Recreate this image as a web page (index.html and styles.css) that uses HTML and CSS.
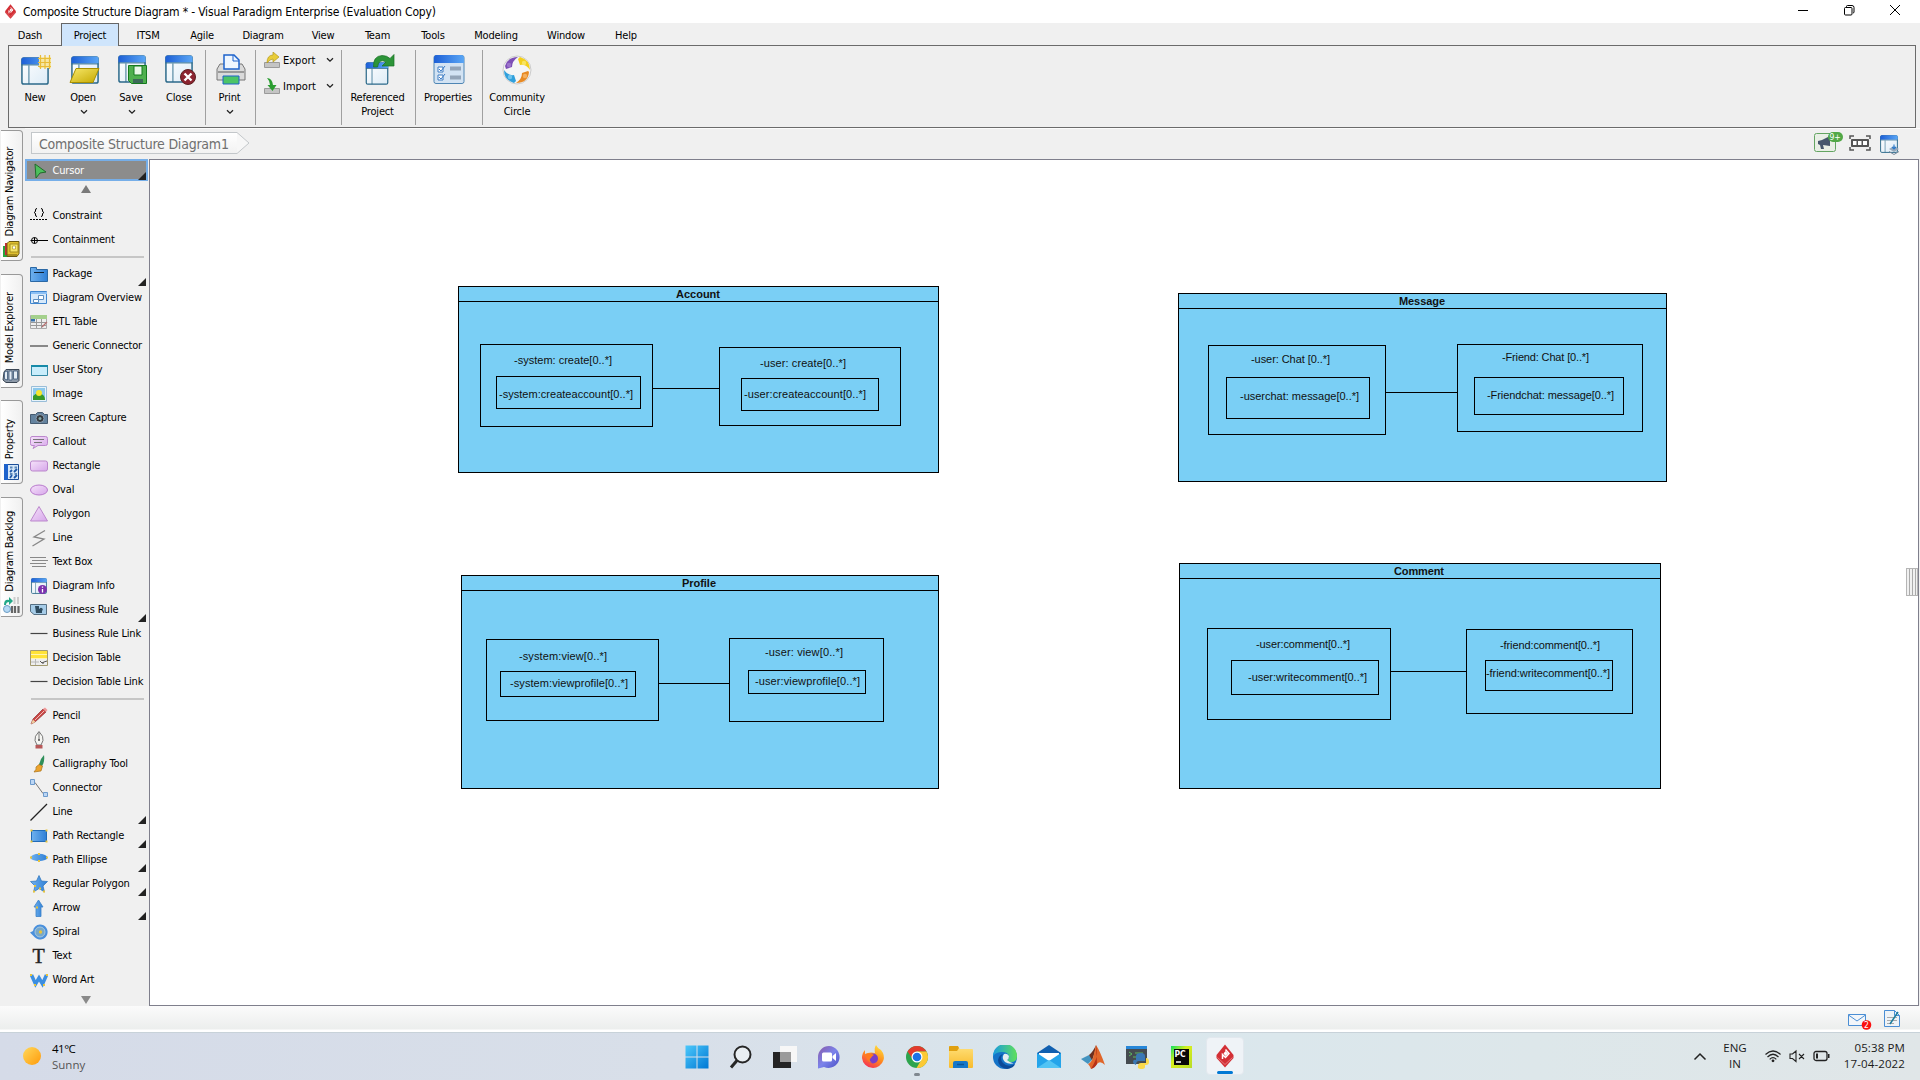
FILE: index.html
```html
<!DOCTYPE html>
<html lang="en">
<head>
<meta charset="utf-8">
<title>Composite Structure Diagram * - Visual Paradigm Enterprise (Evaluation Copy)</title>
<link rel="stylesheet" href="styles.css">
</head>
<body>
<svg class="defs" width="0" height="0" aria-hidden="true">
  <defs>
    <linearGradient id="bar" x2="1"><stop offset="0" stop-color="#1d5fd6"/><stop offset="1" stop-color="#5aa6f5"/></linearGradient>
    <linearGradient id="blue" x2="1"><stop offset="0" stop-color="#6fb1ee"/><stop offset="1" stop-color="#2f7fd6"/></linearGradient>
    <linearGradient id="pane" x2="1" y2="1"><stop offset="0" stop-color="#fff"/><stop offset="1" stop-color="#dcebf6"/></linearGradient>
    <linearGradient id="pink" x2="1" y2="1"><stop offset="0" stop-color="#f6e3fa"/><stop offset="1" stop-color="#d6a6ea"/></linearGradient>
    <linearGradient id="gold" x2="1" y2="1"><stop offset="0" stop-color="#f8e96a"/><stop offset="1" stop-color="#c4a800"/></linearGradient>
    <linearGradient id="win" x2="1" y2="1"><stop offset="0" stop-color="#4cc8fb"/><stop offset="1" stop-color="#0078d4"/></linearGradient>
    <linearGradient id="edge" x2="1" y2="0"><stop offset="0" stop-color="#1a9be0"/><stop offset="1" stop-color="#5fe05a"/></linearGradient>
    <linearGradient id="fox" x1="0.7" y1="0" x2="0.2" y2="1"><stop offset="0" stop-color="#ffdc3c"/><stop offset="0.5" stop-color="#ff8a1e"/><stop offset="1" stop-color="#f5285a"/></linearGradient>
    <linearGradient id="sun" x2="1" y2="1"><stop offset="0" stop-color="#ffd95c"/><stop offset="1" stop-color="#ff9a0a"/></linearGradient>
    <linearGradient id="chat" x2="1" y2="1"><stop offset="0" stop-color="#8a5aa8"/><stop offset="0.5" stop-color="#7b83eb"/><stop offset="1" stop-color="#4b4fc4"/></linearGradient>
    <linearGradient id="folder" x2="0" y2="1"><stop offset="0" stop-color="#ffe07a"/><stop offset="1" stop-color="#f8bb2c"/></linearGradient>
    <linearGradient id="pc" x2="1" y2="1"><stop offset="0" stop-color="#10e060"/><stop offset="0.4" stop-color="#d8f01e"/><stop offset="1" stop-color="#b8dc28"/></linearGradient>
    <symbol id="window" viewBox="0 0 30 30"><rect x="1" y="1" width="28" height="28" rx="2" fill="url(#pane)" stroke="#2c6a8a" stroke-width="1.6"/><path d="M0.5 8V3q0-2.500 2.500-2.500h24q2.500 0 2.500 2.500v5z" fill="url(#bar)"/><path d="M0.500 8.500h29M8.500 9v20" stroke="#2c6a8a"/></symbol>
    <symbol id="vp" viewBox="0 0 24 24"><path d="M12 0.500L20.500 11v3L12 23.500 3.500 14v-3z" fill="#d32f35"/><path d="M12.500 5.500L16 9.500 12.500 13.500 9.500 10.500V15" fill="none" stroke="#fff" stroke-width="1.500"/><path d="M12.500 7L15 9.500 12.500 12 10.500 9.500z" fill="#fff"/><path d="M4.500 13.500l7.500 7 7.500-7" fill="none" stroke="#e88a8e" stroke-width="0.800"/></symbol>
    <symbol id="chev" viewBox="0 0 8 6"><path d="M1 1.200l3 3 3-3" fill="none" stroke="#222" stroke-width="1.300"/></symbol>
  </defs>
</svg>

<header class="titlebar">
  <svg class="app-logo" viewBox="0 0 24 24"><use href="#vp"/></svg>
  <span class="title">Composite Structure Diagram * - Visual Paradigm Enterprise (Evaluation Copy)</span>
  <div class="window-buttons">
    <svg viewBox="0 0 12 12"><path d="M1 6.500h10" stroke="#000"/></svg>
    <svg viewBox="0 0 12 12"><path d="M3.500 3V2.500q0-1 1-1H9q2 0 2 2V8q0 1-1 1" fill="none" stroke="#000"/><rect x="1.500" y="3.500" width="7.500" height="7.500" rx="1" fill="none" stroke="#000"/></svg>
    <svg viewBox="0 0 12 12"><path d="M1 1l10 10M11 1L1 11" stroke="#000"/></svg>
  </div>
</header>

<nav class="menu">
  <span class="m-dash">Dash</span><span class="m-project active">Project</span><span class="m-itsm">ITSM</span><span class="m-agile">Agile</span><span class="m-diagram">Diagram</span><span class="m-view">View</span><span class="m-team">Team</span><span class="m-tools">Tools</span><span class="m-modeling">Modeling</span><span class="m-window">Window</span><span class="m-help">Help</span>
</nav>

<section class="ribbon">
  <div class="group first">
    <div class="cmd"><svg viewBox="0 0 32 32"><use href="#window" x="1" y="3" width="28" height="28"/><path d="M19 3h12v11H19z" fill="#f6e7a4"/><path d="M18 4.500h13M18 8.500h13M18 12.500h13M20.500 1v14M25 1v14M29.500 1v14" stroke="#e8bc38" stroke-width="1.200"/></svg><b>New</b></div>
    <div class="cmd"><svg viewBox="0 0 32 32"><use href="#window" x="3" y="2" width="28" height="28"/><path d="M8 14.500h23l-6 14H2z" fill="url(#gold)" stroke="#a89000"/></svg><b>Open</b><svg class="chev"><use href="#chev"/></svg></div>
    <div class="cmd"><svg viewBox="0 0 32 32"><use href="#window" x="2" y="1" width="28" height="28"/><path d="M12.500 11.500h18v18h-15l-3-3z" fill="#4fb04f" stroke="#157a1f"/><path d="M18 12h8v9h-8z" fill="#e8f8e8" stroke="#157a1f"/><path d="M17 25h10v4H17z" fill="#3c6a58"/></svg><b>Save</b><svg class="chev"><use href="#chev"/></svg></div>
    <div class="cmd"><svg viewBox="0 0 32 32"><use href="#window" x="1" y="1" width="28" height="28"/><circle cx="24" cy="23" r="7.500" fill="#8c2430" stroke="#5c2020"/><path d="M20.500 19.500l7 7M27.500 19.500l-7 7" stroke="#fff" stroke-width="2.400"/></svg><b>Close</b></div>
  </div>
  <div class="group">
    <div class="cmd"><svg viewBox="0 0 32 32"><path d="M5 10h22l3 5v11H2V15z" fill="#dadada" stroke="#777"/><path d="M9 1h10l5 5v9H9z" fill="#eef6ff" stroke="#1e63cc" stroke-width="1.500"/><path d="M18 1v6h6" fill="none" stroke="#1e63cc"/><path d="M3 18h26" stroke="#999" stroke-width="2"/><path d="M8 22h16v8H8z" fill="#4cc466" stroke="#1e63cc"/></svg><b>Print</b><svg class="chev"><use href="#chev"/></svg></div>
  </div>
  <div class="group stack">
    <div class="small"><svg viewBox="0 0 16 16"><path d="M0.500 10.500h15v5H0.500z" fill="#c4c4c4" stroke="#9a9a9a"/><path d="M3 11Q3 3 9 3V0l6 5-6 5V7Q6 7 3 11z" fill="#e8cc38" stroke="#b39a1c" stroke-width="0.700"/></svg><b>Export</b><svg class="chev"><use href="#chev"/></svg></div>
    <div class="small"><svg viewBox="0 0 16 16"><path d="M0.500 10.500h15v5H0.500z" fill="#c4c4c4" stroke="#9a9a9a"/><path d="M3 0Q8 0 9 7h3.500l-4 6-5-6H6Q6 3 3 0z" fill="#2a9d30"/></svg><b>Import</b><svg class="chev"><use href="#chev"/></svg></div>
  </div>
  <div class="group">
    <div class="cmd w-ref"><svg viewBox="0 0 32 32"><use href="#window" x="2" y="8" width="24" height="23"/><path d="M10.500 13Q10 2 19 1.500q5 0 8 3L31 0.500V12H19l4-4q-7-4-8.500 5z" fill="#2c9438" stroke="#187024" stroke-width="0.700"/></svg><b>Referenced<br>Project</b></div>
  </div>
  <div class="group">
    <div class="cmd w-prop"><svg viewBox="0 0 32 32"><rect x="1" y="1.500" width="30" height="28" rx="2" fill="#d3e3f3" stroke="#4f86b4"/><path d="M1 9V4q0-3 3-3h24q3 0 3 3v5z" fill="url(#bar)"/><path d="M5 13h5v5H5zM5 21h5v5H5z" fill="#fff" stroke="#3c7cc4"/><path d="M6 15l2 2 4-5M6 23l2 2 4-5" fill="none" stroke="#3c7cc4"/><path d="M17 14.500h11M17 23.500h11" stroke="#94a5b8" stroke-width="4"/></svg><b>Properties</b></div>
  </div>
  <div class="group last">
    <div class="cmd w-comm"><svg viewBox="0 0 32 32"><circle cx="16" cy="16" r="14" fill="#f5f5f5" stroke="#ccc"/><path d="M4 12Q7 3 17 3Q11 7 11 13L5 15z" fill="#7d4fb6"/><path d="M19 3Q29 6 29 16Q25 10 19 11L17 5z" fill="#f3cf1c"/><path d="M28 18Q27 29 15 29Q21 25 21 19l6-2z" fill="#e88a24"/><path d="M13 29Q3 26 3 16Q7 22 13 21l2 6z" fill="#30a0dc"/><circle cx="8" cy="11" r="2.200" fill="#9c74cc"/><circle cx="23" cy="9" r="2.200" fill="#f8e460"/><circle cx="24" cy="22" r="2.200" fill="#f4b060"/><circle cx="9" cy="23" r="2.200" fill="#70c4ee"/></svg><b>Community<br>Circle</b></div>
  </div>
</section>

<main class="workspace">
  <aside class="side-tabs">
    <div class="side-tab t-nav"><span>Diagram Navigator</span><svg viewBox="0 0 18 18"><path d="M1 6h5v11H1z" fill="#27a43c"/><path d="M3 3h6v12H3z" fill="#c52a3a"/><path d="M5 3.500l2-2h10v12l-2 3H5z" fill="#e0c030" stroke="#6c5a10"/><path d="M8 4h8v8H8z" fill="#f5e468" stroke="#a48c1c"/><path d="M10.500 6h3v3h-3z" fill="#fff" stroke="#a48c1c" stroke-width="0.600"/><path d="M5 15h10" stroke="#6c5a10"/></svg></div>
    <div class="side-tab t-model"><span>Model Explorer</span><svg viewBox="0 0 18 18"><path d="M4 2.500h13v11l-2 2H4L1 13l1-8z" fill="#8d99a8" stroke="#3a4654"/><path d="M2.500 5l3-1v9l-3-1zM7 4h3v9H7zM11.500 4h4v8h-4z" fill="#e4ecf4" stroke="#3c5878" stroke-width="0.800"/></svg></div>
    <div class="side-tab t-prop"><span>Property</span><svg viewBox="0 0 18 18"><path d="M2.500 1.500h14v15h-14z" fill="#d5e7f8" stroke="#1c4e98"/><path d="M2 1h4v16H2z" fill="#1e63cc"/><path d="M8 9l2-2M8 15l2-3M12 9l3-3M12 15l3-3" stroke="#1e58a8" stroke-width="1.800"/><path d="M8 4.500h2.500M12.500 4.500H15M8 11h2.500M12.500 11H15" stroke="#5a86b8" stroke-width="2"/></svg></div>
    <div class="side-tab t-back"><span>Diagram Backlog</span><svg viewBox="0 0 18 18"><path d="M2 9Q2 3 7 4V1l4 4-4 4V6Q4 6 4 9z" fill="#22a888"/><circle cx="5" cy="13" r="3.500" fill="#b4d8f4" stroke="#6c9cc4"/><path d="M12.500 1v7M16 1v7" stroke="#ccc" stroke-width="2"/><path d="M10 10v7M13 10v7M16.500 10v7" stroke="#666" stroke-width="2.200"/></svg></div>
  </aside>
  <div class="editor">
    <div class="crumbs">
      <div class="crumb">Composite Structure Diagram1</div>
      <svg class="crumb-arrow" viewBox="0 0 13 22"><path d="M0 0.500L12 11 0 21.500z" fill="#f7f7f7"/><path d="M0 0.500L12 11 0 21.500" fill="none" stroke="#c3c7ca"/></svg>
      <div class="crumb-tools">
        <svg class="ad" viewBox="0 0 30 22"><rect x="0.500" y="2.500" width="21" height="18" rx="2" fill="#e9efe6" stroke="#64a562"/><path d="M4 10l4-1 8-4v10l-7-1 1 4H7l-1-4-2-1z" fill="#46566c"/><rect x="14" y="1" width="15" height="10" rx="5" fill="#52a847"/><text x="15.500" y="9.200" class="badge-text">9+</text></svg>
        <svg class="film" viewBox="0 0 22 16"><path d="M1 4V1h4M17 1h4v3M1 12v3h4M17 15h4v-3" fill="none" stroke="#555" stroke-width="1.500"/><path d="M2.500 4.500h17v7h-17z" fill="#555" stroke="#555"/><path d="M4 6h3.500v4H4zM9 6h3.500v4H9zM14 6h4v4h-4z" fill="#fff"/></svg>
        <svg class="panel" viewBox="0 0 21 20"><use href="#window" width="20" height="18"/><path d="M10 14l5-3 5 3-5 3z" fill="#9ab"/><path d="M10 16.500l5 3 5-3" fill="none" stroke="#789"/><path d="M15 9.500v5M13 12l2 2 2-2" stroke="#2a7acc" stroke-width="1.100" fill="none"/></svg>
      </div>
    </div>
    <div class="body-row">
      <aside class="palette">
        <div class="tool selected more"><svg viewBox="0 0 18 18"><path d="M5 2l11 8-6 1-4 5z" fill="#4cc05c" stroke="#226a2c"/></svg>Cursor</div>
        <div class="scroll scroll-up"></div>
        <div class="tool"><svg viewBox="0 0 18 18"><path d="M7 1.500Q5.500 1.500 5.500 3v1.500L4 5.500l1.500 1V8Q5.500 9.500 7 9.500M11 1.500q1.500 0 1.500 1.500v1.500l1.500 1-1.500 1V8q0 1.500-1.500 1.500" fill="none" stroke="#000"/><path d="M0 12.500h18" stroke="#000" stroke-dasharray="2 1"/></svg>Constraint</div>
        <div class="tool"><svg viewBox="0 0 18 18"><circle cx="4.500" cy="9.500" r="3" fill="none" stroke="#000"/><path d="M0.500 9.500H18M4.500 6.500v6" stroke="#000"/></svg>Containment</div>
        <div class="rule"></div>
        <div class="tool more"><svg viewBox="0 0 18 18"><path d="M0.500 2.500h6v2h11v12H0.500z" fill="url(#blue)" stroke="#2b68a4"/><path d="M4 7.500h10" stroke="#123"/></svg>Package</div>
        <div class="tool"><svg viewBox="0 0 18 18"><path d="M0.500 2.500h16v12H0.500z" fill="#d7e9fa" stroke="#3f86d0"/><path d="M1 3h16v2H1z" fill="#8cc0f4"/><path d="M3.500 10.500h5v3h-5zM8.500 6.500h5v4h-5z" fill="#fff" stroke="#5d8ec0"/></svg>Diagram Overview</div>
        <div class="tool"><svg viewBox="0 0 18 18"><path d="M0.500 2.500h16v13H0.500z" fill="#eee" stroke="#aaa"/><path d="M1 2h16v4H1z" fill="#a4d08c"/><path d="M1 9.500h15M1 12.500h15M6.500 6v9M11.500 6v9" stroke="#999"/><path d="M1 6h4v2.500H1z" fill="#3570ac"/><path d="M12 14l5-5" stroke="#b87070" stroke-width="1.300"/></svg>ETL Table</div>
        <div class="tool"><svg viewBox="0 0 18 18"><path d="M0 9h18" stroke="#888" stroke-width="2"/></svg>Generic Connector</div>
        <div class="tool"><svg viewBox="0 0 18 18"><path d="M1.500 4.500h16v10h-16z" fill="#c9edfb" stroke="#3388a4"/><path d="M1 5h17" stroke="#168aa8" stroke-width="2"/></svg>User Story</div>
        <div class="tool"><svg viewBox="0 0 18 18"><path d="M1.500 1.500h15v15h-15z" fill="#e7f3fb" stroke="#99bdd8"/><path d="M3 3h12v12H3z" fill="#8cc8ec"/><path d="M3 15V11q5-5 8-2 4 1 4 6z" fill="#379a28"/><circle cx="9" cy="8" r="3" fill="#f6e72e"/></svg>Image</div>
        <div class="tool"><svg viewBox="0 0 18 18"><path d="M0.500 5.500h5l2-2h5l2 2h3v9H0.500z" fill="#64839f" stroke="#465b70"/><circle cx="10" cy="9.500" r="4" fill="#34383c" stroke="#8ca0b4"/><circle cx="10" cy="9.500" r="1.500" fill="#8aa"/></svg>Screen Capture</div>
        <div class="tool"><svg viewBox="0 0 18 18"><path d="M2 3.500h13.500q2 0 2 2v5q0 2-2 2H8l-5 3 1.500-3H2q-1.500 0-1.500-2v-5q0-2 1.500-2z" fill="url(#pink)" stroke="#bb87cc"/><path d="M3 6.500h11M4 9.500h8" stroke="#777"/></svg>Callout</div>
        <div class="tool"><svg viewBox="0 0 18 18"><rect x="0.500" y="4" width="17" height="10" rx="2" fill="url(#pink)" stroke="#bb87cc"/></svg>Rectangle</div>
        <div class="tool"><svg viewBox="0 0 18 18"><ellipse cx="9" cy="9" rx="8.500" ry="5" fill="url(#pink)" stroke="#b87acc"/></svg>Oval</div>
        <div class="tool"><svg viewBox="0 0 18 18"><path d="M9 1.500L17.500 16H0.500z" fill="url(#pink)" stroke="#bb87cc"/></svg>Polygon</div>
        <div class="tool"><svg viewBox="0 0 18 18"><path d="M15 1.500L4 8l10 2-11.500 7" fill="none" stroke="#888" stroke-width="1.300"/></svg>Line</div>
        <div class="tool"><svg viewBox="0 0 18 18"><path d="M0 4.500h16M2 7.500h16M0 10.500h16M2 13.500h14" stroke="#888"/></svg>Text Box</div>
        <div class="tool"><svg viewBox="0 0 18 18"><use href="#window" x="1" y="1" width="16" height="16"/><circle cx="12.500" cy="12.500" r="4.500" fill="#7c32ae"/><path d="M12.500 12v3.500M12.500 9.500v1.300" stroke="#fff" stroke-width="1.300"/></svg>Diagram Info</div>
        <div class="tool more"><svg viewBox="0 0 18 18"><path d="M0.500 3.500h16v10H4l-3.500-3z" fill="#a6cce8" stroke="#566f82"/><path d="M5 5h4v3h3v4H6z" fill="#2f4c60"/><circle cx="11" cy="8.500" r="1.700" fill="#2f4c60"/></svg>Business Rule</div>
        <div class="tool"><svg viewBox="0 0 18 18"><path d="M0.500 8.500h17" stroke="#444" stroke-width="1.200"/></svg>Business Rule Link</div>
        <div class="tool"><svg viewBox="0 0 18 18"><path d="M0.500 1.500h17v15H0.500z" fill="#eee" stroke="#a39a70"/><path d="M1 2h16v8H1z" fill="#ffe338"/><path d="M1 5.500h16M1 9.500h16" stroke="#fff6b0"/><path d="M5.500 10v6M1 13h8" stroke="#b8b8b8"/><path d="M10 12l2 2 2-1 3-1M13 13v2" stroke="#555" fill="none"/></svg>Decision Table</div>
        <div class="tool"><svg viewBox="0 0 18 18"><path d="M0.500 8.500h17" stroke="#444" stroke-width="1.200"/></svg>Decision Table Link</div>
        <div class="rule"></div>
        <div class="tool"><svg viewBox="0 0 18 18"><path d="M1 17l2-5L13 2l3 3L5 15z" fill="#cc4444" stroke="#8c3434" stroke-width="0.700"/><path d="M13 2l2-1.500 2.500 2.500L16 5z" fill="#f09898"/><path d="M1 17l2-4.500 2.500 2.500z" fill="#f0d0a0"/><path d="M5 13l9-9" stroke="#eac0b8"/></svg>Pencil</div>
        <div class="tool"><svg viewBox="0 0 18 18"><path d="M9 0.500q5 5 4 9l-2 4.500H7L5 9.500q-1-4 4-9z" fill="#f5f5f2" stroke="#777"/><path d="M9 1v8" stroke="#777"/><circle cx="9" cy="9" r="1" fill="#555"/><path d="M5.500 14h7v3.500h-7z" fill="#b85858"/></svg>Pen</div>
        <div class="tool"><svg viewBox="0 0 18 18"><path d="M14 0q1 7-2 11l-3-1q1-6 5-10z" fill="#2f8f5a"/><path d="M9 9.500l3.500 1.500-1.500 5-7 1q3-3 2-5z" fill="#eda42c" stroke="#a87018" stroke-width="0.700"/></svg>Calligraphy Tool</div>
        <div class="tool"><svg viewBox="0 0 18 18"><path d="M3 3.500h2l8 11h2" fill="none" stroke="#777"/><path d="M0.500 0.500h4v5h-4zM13.500 13.500h4v4h-4z" fill="#bcd6f4" stroke="#6c9acc"/></svg>Connector</div>
        <div class="tool more"><svg viewBox="0 0 18 18"><path d="M0.500 17.500L17 1" stroke="#222" stroke-width="1.200"/></svg>Line</div>
        <div class="tool more"><svg viewBox="0 0 18 18"><path d="M1.500 3.500h15v11h-15z" fill="url(#blue)" stroke="#216bb8"/><path d="M0.500 2.500h2v2h-2zM15.500 2.500h2v2h-2zM0.500 13.500h2v2h-2zM15.500 13.500h2v2h-2z" fill="#e8c43a"/></svg>Path Rectangle</div>
        <div class="tool more"><svg viewBox="0 0 18 18"><ellipse cx="9" cy="6.500" rx="8.500" ry="3.700" fill="url(#blue)"/><path d="M8 2h2v2H8zM0 5.500h2v2H0zM16 5.500h2v2h-2zM8 9h2v2H8z" fill="#e8c43a"/></svg>Path Ellipse</div>
        <div class="tool more"><svg viewBox="0 0 18 18"><path d="M9 0.500l2.500 5.500 6 .5-4.500 4.500 1.500 6L9 13.500 3.500 17 5 11 0.500 6.500l6-.5z" fill="url(#blue)" stroke="#2a72bc" stroke-width="0.700"/><path d="M4 10h2v2H4zM9 12.500h2v2H9zM3 15.500h2v2H3zM13 15.500h2v2h-2z" fill="#e8c43a"/></svg>Regular Polygon</div>
        <div class="tool more"><svg viewBox="0 0 18 18"><path d="M8.500 1l4.500 7h-2v9.500H6V8H4z" fill="url(#blue)" stroke="#3b82c8" stroke-width="0.800"/><path d="M6 7.500h2v2H6z" fill="#e8c43a"/></svg>Arrow</div>
        <div class="tool"><svg viewBox="0 0 18 18"><path d="M10 1.500a7.500 7.500 0 1 1-5 13L0 9.500 3 8q1-6 7-6.500z" fill="#4a90dc"/><circle cx="10" cy="9" r="5" fill="#78a8c8" stroke="#a8c8e0"/><circle cx="10.500" cy="9" r="1.700" fill="#e8c43a"/></svg>Spiral</div>
        <div class="tool"><svg class="glyph-box" viewBox="0 0 18 24"><text x="2.500" y="19" class="glyph-t">T</text></svg>Text</div>
        <div class="tool"><svg viewBox="0 0 18 18"><path d="M1.500 4l4 9L9 7l3.500 6 4-9" fill="none" stroke="#3c8ee0" stroke-width="3.500"/><path d="M0 3h2v2H0zM16 3h2v2h-2zM4 13h2v2H4zM13 13h2v2h-2z" fill="#e8c43a"/></svg>Word Art</div>
        <div class="scroll scroll-down"></div>
      </aside>
      <div class="canvas">
        <svg class="diagram" viewBox="150 160 1768 845" width="1768" height="845">
          <g class="shape">
            <rect x="458.500" y="286.500" width="480" height="186"/><path d="M458.500 301.500h480M652.500 388.500h67"/>
            <rect x="480.500" y="344.500" width="172" height="82"/><rect x="496.500" y="376.500" width="144" height="32"/>
            <rect x="719.500" y="347.500" width="181" height="78"/><rect x="741.500" y="378.500" width="137" height="32"/>
            <rect x="1178.500" y="293.500" width="488" height="188"/><path d="M1178.500 308.500h488M1385.500 392.500h72"/>
            <rect x="1208.500" y="345.500" width="177" height="89"/><rect x="1226.500" y="377.500" width="143" height="41"/>
            <rect x="1457.500" y="344.500" width="185" height="87"/><rect x="1474.500" y="377.500" width="149" height="37"/>
            <rect x="461.500" y="575.500" width="477" height="213"/><path d="M461.500 590.500h477M658.500 683.500h71"/>
            <rect x="486.500" y="639.500" width="172" height="81"/><rect x="500.500" y="671.500" width="135" height="25"/>
            <rect x="729.500" y="638.500" width="154" height="83"/><rect x="748.500" y="670.500" width="117" height="23"/>
            <rect x="1179.500" y="563.500" width="481" height="225"/><path d="M1179.500 578.500h481M1390.500 671.500h76"/>
            <rect x="1207.500" y="628.500" width="183" height="91"/><rect x="1231.500" y="660.500" width="147" height="34"/>
            <rect x="1466.500" y="629.500" width="166" height="84"/><rect x="1485.500" y="660.500" width="127" height="30"/>
          </g>
          <g class="name">
            <text x="676" y="298" textLength="44">Account</text><text x="1399" y="305" textLength="46">Message</text>
            <text x="682" y="587" textLength="34">Profile</text><text x="1394" y="575" textLength="50">Comment</text>
          </g>
          <g class="part">
            <text x="514" y="364" textLength="98">-system: create[0..*]</text><text x="499" y="398" textLength="134">-system:createaccount[0..*]</text>
            <text x="760" y="367" textLength="86">-user: create[0..*]</text><text x="744" y="398" textLength="122">-user:createaccount[0..*]</text>
            <text x="1251" y="363" textLength="79">-user: Chat [0..*]</text><text x="1240" y="400" textLength="119">-userchat: message[0..*]</text>
            <text x="1502" y="361" textLength="87">-Friend: Chat [0..*]</text><text x="1487" y="399" textLength="127">-Friendchat: message[0..*]</text>
            <text x="519" y="660" textLength="88">-system:view[0..*]</text><text x="510" y="687" textLength="118">-system:viewprofile[0..*]</text>
            <text x="765" y="656" textLength="78">-user: view[0..*]</text><text x="755" y="685" textLength="105">-user:viewprofile[0..*]</text>
            <text x="1256" y="648" textLength="94">-user:comment[0..*]</text><text x="1248" y="681" textLength="119">-user:writecomment[0..*]</text>
            <text x="1500" y="649" textLength="100">-friend:comment[0..*]</text><text x="1486" y="677" textLength="124">-friend:writecomment[0..*]</text>
          </g>
        </svg>
        <div class="grip"></div>
      </div>
    </div>
  </div>
</main>

<footer class="status">
  <svg class="mail" viewBox="0 0 24 20"><path d="M0.500 4.500h17v11H0.500z" fill="#f2f6fa" stroke="#4a8ed4"/><path d="M0.500 5l8.500 6 8.500-6" fill="none" stroke="#4a8ed4"/><circle cx="18.500" cy="15" r="4.800" fill="#fb1010"/><text x="16" y="18.200" class="badge-text">2</text></svg>
  <svg class="note" viewBox="0 0 16 20"><path d="M0.500 1.500h10l5 5v11H0.500z" fill="#eef3f7" stroke="#4a8ed4"/><path d="M10.500 1.500v5h5" fill="none" stroke="#4a8ed4"/><path d="M3 8.500h10M3 11.500h10M3 14.500h7" stroke="#aaa"/><path d="M6 15l8-12" stroke="#1c7c9c" stroke-width="1.500"/></svg>
</footer>

<div class="taskbar">
  <div class="weather"><svg viewBox="0 0 20 20"><circle cx="10" cy="10" r="9" fill="url(#sun)"/></svg><div><div class="temp">41°C</div><div class="cond">Sunny</div></div></div>
  <div class="apps">
    <div class="app"><svg viewBox="0 0 24 24"><path d="M0.500 0.500h11v11h-11zM12.500 0.500h11v11h-11zM0.500 12.500h11v11h-11zM12.500 12.500h11v11h-11z" fill="url(#win)"/></svg></div>
    <div class="app"><svg viewBox="0 0 24 24"><circle cx="13.500" cy="9.500" r="8" fill="#e9eef2" stroke="#262626" stroke-width="2"/><path d="M8 15.500L2 22.500" stroke="#262626" stroke-width="3"/></svg></div>
    <div class="app"><svg viewBox="0 0 24 24"><path d="M0 7h18v16H0z" fill="#242424"/><path d="M7 1h17v16H7z" fill="#f7f7f7"/><path d="M7 7h11v10H7z" fill="#9b9b9b"/></svg></div>
    <div class="app"><svg viewBox="0 0 24 24"><path d="M12 1a11 11 0 1 1-5 21l-6 1.500V12A11 11 0 0 1 12 1z" fill="url(#chat)"/><rect x="5" y="7.500" width="10" height="9" rx="1.500" fill="#fff"/><path d="M15.500 11l3.500-3v8l-3.500-3z" fill="#fff"/></svg></div>
    <div class="app"><svg viewBox="0 0 24 24"><path d="M15 0q2 4 5 5 4 5 2.500 10A11 11 0 0 1 1 13Q1 8 4 5v4l3-1q3-1 7 0Q13 3 15 0z" fill="url(#fox)"/><circle cx="12" cy="13.500" r="5" fill="#7a3ec8"/><path d="M5 9q5-2 8 1-2 1-3 3-3 2 1 5-6-1-6-9z" fill="#ff7a1e"/></svg></div>
    <div class="app running"><svg viewBox="0 0 24 24"><circle cx="12" cy="12" r="11" fill="#2da44e"/><path d="M2.500 6.500A11 11 0 0 1 21.500 6.500H12Q7 7 7 13z" fill="#e33b2e"/><path d="M21.500 6.500A11 11 0 0 1 11.500 23l5-8.500Q18 10 12 6.500z" fill="#fcc934"/><circle cx="12" cy="12" r="5.500" fill="#fff"/><circle cx="12" cy="12" r="4.300" fill="#1b73e8"/></svg></div>
    <div class="app"><svg viewBox="0 0 24 24"><path d="M0 2q0-1 1-1h7l3 3h12q1 0 1 1v17q0 1-1 1H1q-1 0-1-1z" fill="url(#folder)"/><path d="M0 2q0-1 1-1h8l1 2-2 3H0z" fill="#e0a010"/><path d="M4 23v-5q0-2 2-2h11q2 0 2 2v5z" fill="#1677c8"/><path d="M8 19.500h7" stroke="#0e5596" stroke-width="1.500"/></svg></div>
    <div class="app"><svg viewBox="0 0 24 24"><circle cx="12" cy="12" r="12" fill="#1473c8"/><path d="M0 11A12 12 0 0 1 24 11q0 6-6 6-4 0-4-2 2-1 2-4-1-4-7-4-6 0-9 4z" fill="url(#edge)"/><path d="M10 9q-4 4 0 9 5 5 12 1-1 4-8 5Q5 22 5 15q1-5 5-6z" fill="#0c4a98"/><path d="M14 15q2-1 2-4-2-3-5-2-3 4 1 8 4 3 10 1-4 1-8-3z" fill="#e4edf0"/></svg></div>
    <div class="app"><svg viewBox="0 0 24 24"><path d="M0 8l12-8 12 8v3H0z" fill="#1160b0"/><path d="M2 8h20v8H2z" fill="#fff"/><path d="M0 8l12 8 12-8v15H0z" fill="#24a4ea"/><path d="M0 23l12-8 12 8z" fill="#52c4f4"/></svg></div>
    <div class="app"><svg viewBox="0 0 24 24"><path d="M0 14l8-4 4 4-5 5z" fill="#4494c0"/><path d="M8 10q4-3 7-10-1 9-4 15z" fill="#6c3020"/><path d="M15 0q4 6 9 20-5-5-8-1-3 4-6 5-1-3-3-5 3-1 5-6z" fill="#e0662a"/><path d="M15 0q2 8 0 14-2 5-5 10 4-1 6-5z" fill="#b63018"/></svg></div>
    <div class="app"><svg viewBox="0 0 24 24"><path d="M1 1h21v18H1z" fill="#454b50"/><path d="M1 1h21v3H1z" fill="#2687d8"/><path d="M4 7l3 2-3 2M8 12h4M10 8h8" stroke="#5cb860" fill="none"/><path d="M11 15v-4q0-3 5-3 4 0 4 3v5h-6q-3 0-3 4-3-1-3-3 0-3 3-2z" fill="#3a78b4"/><path d="M21 13q3 0 3 4 0 3-3 3h-1v2q0 2-4 2t-3-3q0-3 3-3h5z" fill="#fbd94c"/></svg></div>
    <div class="app"><svg viewBox="0 0 24 24"><path d="M2 1h21v22H2z" fill="url(#pc)"/><path d="M5 4h15v16H5z" fill="#080808"/><text x="5.500" y="12" class="pc-text">PC</text><path d="M7 17h5" stroke="#fff" stroke-width="1.500"/></svg></div>
    <div class="app current"><svg viewBox="0 0 24 24"><use href="#vp"/></svg></div>
  </div>
  <div class="tray">
    <svg class="tray-more" viewBox="0 0 14 9"><path d="M1.500 7.500l5.500-5.500 5.500 5.500" fill="none" stroke="#222" stroke-width="1.500"/></svg>
    <div class="lang">ENG<br>IN</div>
    <svg class="wifi" viewBox="0 0 16 14"><path d="M0.500 5.500Q8-1.500 15.500 5.500M2.500 8Q8 2.500 13.500 8M4.700 10.300Q8 7 11.300 10.300" fill="none" stroke="#222" stroke-width="1.200"/><circle cx="8" cy="11.800" r="1.400" fill="#222"/></svg>
    <svg class="mute" viewBox="0 0 16 14"><path d="M1 5h2.500L7 2v10.500L3.500 9.500H1zM10 5l5 5M15 5l-5 5" fill="none" stroke="#222" stroke-width="1.100"/></svg>
    <svg class="battery" viewBox="0 0 17 12"><rect x="1" y="1.500" width="13" height="9" rx="2" fill="none" stroke="#222" stroke-width="1.300"/><path d="M3 3.500h2v5H3zM15 4h1.500v4H15z" fill="#222"/></svg>
    <div class="clock">05:38 PM<br>17-04-2022</div>
  </div>
</div>
</body>
</html>
```
FILE: styles.css
```css
* { box-sizing: border-box; }
body {
  margin: 0;
  width: 1920px;
  height: 1080px;
  overflow: hidden;
  display: flex;
  flex-direction: column;
  background: #f0f0f0;
  color: #000;
  font: 11px/14px "DejaVu Sans Condensed", "DejaVu Sans", sans-serif;
  font-stretch: condensed;
  letter-spacing: -0.18px;
}
svg { display: block; flex: none; }
b { font-weight: normal; }
.defs { position: absolute; }

.titlebar { height: 23px; background: #fff; display: flex; align-items: center; padding-left: 3px; }
.app-logo { width: 15px; height: 15px; margin-right: 5px; }
.title { font-size: 12px; letter-spacing: -0.170px; padding-top: 1px; }
.window-buttons { margin-left: auto; display: flex; gap: 34px; padding-right: 19px; margin-top: -3px; }
.window-buttons svg { width: 12px; height: 12px; }

.menu { height: 22px; display: flex; }
.menu span { text-align: center; line-height: 25px; height: 22px; }
.m-dash { width: 61px; padding-right: 1px; }
.m-project, .m-itsm { width: 58px; }
.m-agile { width: 50px; }
.m-diagram { width: 72px; }
.m-view { width: 48px; }
.m-team { width: 61px; }
.m-tools { width: 50px; }
.m-modeling { width: 76px; }
.m-window { width: 64px; }
.m-help { width: 56px; }
.menu .active { height: 23px; line-height: 23px; background: #cfe5fc; border: 1px solid #666; border-bottom: 0; z-index: 1; }

.ribbon { height: 83px; margin: 0 4px 0 8px; border: 1px solid #6b6b6b; display: flex; padding: 4px 0 2px; background: #efefef; }
.group { display: flex; border-right: 1px solid #a0a0a0; }
.group.first { padding-left: 3px; width: 197px; }
.group.last { border: 0; }
.cmd { width: 49px; display: flex; flex-direction: column; align-items: center; padding-top: 4px; text-align: center; }
.first .cmd { width: 48px; }
.cmd > svg:first-child { width: 32px; height: 32px; margin-bottom: 5px; }
.cmd b { margin-left: -2px; }
.cmd .chev { margin: 4px 0 0 -1px; }
.w-ref { width: 73px; }
.w-prop { width: 66px; }
.w-comm { width: 67px; }
.w-comm b { margin-left: 1px; }
.chev { width: 8px; height: 6px; }
.stack { width: 86px; flex-direction: column; padding: 2px 0 0 8px; }
.small { height: 26px; display: flex; align-items: flex-start; }
.small > svg:first-child { width: 16px; height: 16px; margin-right: 3px; }
.small b { width: 43px; line-height: 17px; letter-spacing: 0; }
.small .chev { margin-top: 5px; }

.workspace { height: 878px; display: flex; }
.side-tabs { width: 25px; display: flex; flex-direction: column; padding: 2px 0 0 1px; }
.side-tab {
  width: 22px;
  border: 1px solid #999;
  border-left: 0;
  border-radius: 0 4px 4px 0;
  background: linear-gradient(90deg, #fff, #f0f0f0);
  display: flex;
  flex-direction: column;
  align-items: center;
  justify-content: flex-end;
  gap: 4px;
  padding: 0 1px 2px 0;
}
.side-tab svg { width: 18px; height: 18px; }
.side-tab span { writing-mode: vertical-rl; transform: rotate(180deg); white-space: nowrap; letter-spacing: -0.200px; margin-right: 2px; }
.t-nav { height: 131px; margin-bottom: 13px; }
.t-model { height: 114px; margin-bottom: 12px; }
.t-prop { height: 84px; margin-bottom: 13px; }
.t-back { height: 120px; }
.t-nav span, .t-back span { letter-spacing: -0.270px; }

.editor { flex: 1; display: flex; flex-direction: column; border-top: 1px solid #fcfcfc; }
.crumbs { height: 30px; display: flex; padding: 3px 20px 0 6px; }
.crumb { width: 206px; height: 22px; border: 1px solid #c3c7ca; border-right: 0; background: linear-gradient(#fff, #f2f2f2); color: #6f6f6f; font-size: 14px; letter-spacing: -0.220px; line-height: 22px; padding-left: 7px; white-space: nowrap; }
.crumb-arrow { width: 13px; height: 22px; }
.crumb-tools { margin-left: auto; display: flex; align-items: flex-start; }
.ad { width: 30px; height: 22px; margin-top: -1px; }
.film { width: 22px; height: 16px; margin: 3px 8px 0 5px; }
.panel { width: 21px; height: 20px; margin-top: 3px; }
.badge-text { font-size: 8.500px; fill: #fff; letter-spacing: 0; }

.body-row { flex: 1; display: flex; }
.palette { width: 124px; }
.tool { height: 24px; display: flex; align-items: center; padding-left: 5px; white-space: nowrap; position: relative; }
.tool svg { width: 18px; height: 18px; margin-right: 4.500px; }
.tool.selected { width: 123px; height: 22px; background: #8c8c8c; border: 2px solid #76aee8; padding: 1px 0 0 3px; color: #fff; }
.tool.more::after { content: ""; position: absolute; right: 3px; bottom: 0; border: 4px solid transparent; border-right-color: #222; border-bottom-color: #222; }
.tool.selected.more::after { right: 0; bottom: -1px; }
.scroll { padding: 4px 0 0 56px; }
.scroll::after { content: ""; display: block; width: 0; border: 5px solid transparent; }
.scroll-up { height: 23px; }
.scroll-up::after { border-top: 0; border-bottom: 8px solid #7a7a7a; }
.scroll-down { height: 12px; }
.scroll-down::after { border-bottom: 0; border-top: 8px solid #8a8a8a; }
.rule { height: 10px; padding: 4px 5px 0 6px; }
.rule::after { content: ""; display: block; height: 2px; background: #c6c6c6; }
.tool .glyph-box { height: 24px; }
.glyph-t { font: 20px "Liberation Serif", serif; fill: #222; stroke: #222; stroke-width: 0.400px; }

.canvas { flex: 1; height: 847px; margin-right: 1px; background: #fff; border: 1px solid #7f7f8c; position: relative; }
.shape { fill: #7acff5; stroke: #000; }
.name, .part { font: 11px "Liberation Sans", Arial, sans-serif; letter-spacing: 0; fill: #111; }
.name { font-weight: bold; }
.grip { position: absolute; right: 0; top: 408px; width: 12px; height: 28px; border: 1px solid #b5b5b5; background: repeating-linear-gradient(90deg, #f0f0f0 0 2px, #aaa 2px 3px); }

.status { height: 26px; background: linear-gradient(#fbfbfb, #eceeed 23px, #fff 24px); display: flex; padding: 2px 20px 0; justify-content: flex-end; }
.mail { width: 24px; height: 20px; margin: 2px 12px 0 0; }
.note { width: 16px; height: 20px; margin-top: 1px; }

.taskbar {
  height: 48px;
  border-top: 1px solid #c8d2d9;
  background: linear-gradient(90deg, #d5dbe8, #d8dfe9 35%, #dae7ed 60%, #dde7ea 80%, #e0e6e8);
  display: grid;
  grid-template-columns: 675px 572px 1fr;
  font: 11.500px/16px "Open Sans", "Noto Sans", sans-serif;
  letter-spacing: -0.050px;
}
.weather { display: flex; padding: 8px 0 0 22px; gap: 10px; }
.weather svg { width: 20px; height: 20px; margin-top: 5px; }
.temp { line-height: 16px; letter-spacing: -0.500px; }
.cond { color: #555; letter-spacing: 0; }
.apps { display: flex; }
.app { width: 44px; height: 47px; display: flex; justify-content: center; align-items: center; position: relative; }
.app svg { width: 24px; height: 24px; }
.app svg text { letter-spacing: 0; }
.current { width: 38px; height: 38px; margin: 4px 3px 0; padding-bottom: 1px; background: #eff3f7; border: 1px solid #e2e8ee; border-radius: 4px; }
.running::after { content: ""; position: absolute; bottom: 4px; width: 6px; height: 3px; border-radius: 2px; background: #808890; }
.current::after { content: ""; position: absolute; bottom: 0; width: 16px; height: 3px; border-radius: 2px; background: #0078d4; }
.pc-text { font: bold 8.500px "DejaVu Sans Condensed", sans-serif; fill: #fff; }
.tray { display: flex; justify-content: flex-end; align-items: center; padding: 0 15px 1px 0; color: #1a1a1a; }
.tray-more { width: 14px; height: 9px; margin-right: 16px; }
.lang { text-align: center; width: 24px; margin-right: 18px; }
.wifi { width: 16px; height: 14px; margin-right: 8px; }
.mute { width: 16px; height: 14px; margin-right: 8px; }
.battery { width: 17px; height: 12px; margin-right: 13px; }
.clock { text-align: right; width: 62px; letter-spacing: 0.120px; white-space: nowrap; }
```
